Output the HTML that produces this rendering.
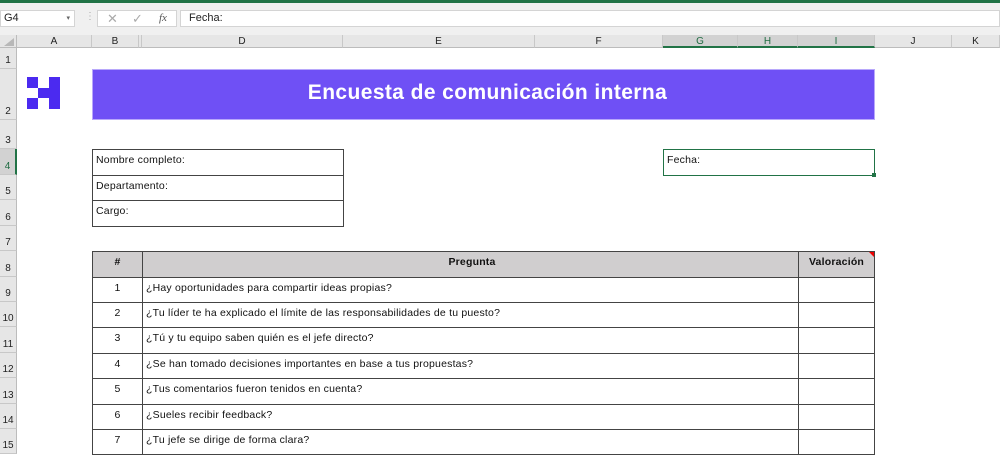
<!DOCTYPE html>
<html><head><meta charset="utf-8"><style>
*{margin:0;padding:0;box-sizing:border-box}
body{width:1000px;height:441px;overflow:hidden;background:#fff;font-family:"Liberation Sans",sans-serif;position:relative;font-size:11px;color:#222}
.a{position:absolute}
.ch{position:absolute;top:35px;height:13px;border-right:1px solid #c8c8c8;text-align:center;font-size:10px;line-height:13px;color:#222;background:#e6e6e6;border-bottom:1px solid #bcbcbc}
.rh{position:absolute;left:0;width:17px;border-bottom:1px solid #c8c8c8;font-size:10px;text-align:center;background:#e6e6e6;border-right:1px solid #bcbcbc;display:flex;align-items:flex-end;justify-content:center;padding-bottom:2px;color:#222}
.cell{position:absolute;border:1px solid #444;font-size:10.5px;padding-left:3px;line-height:21px;color:#111;letter-spacing:0.2px}
</style></head><body>
<div class="a" style="left:0;top:0;width:1000px;height:3px;background:#217346"></div>
<div class="a" style="left:0;top:3px;width:1000px;height:32px;background:#f0f0f0"></div>
<div class="a" style="left:0;top:10px;width:75px;height:17px;background:#fff;border:1px solid #d4d4d4;font-size:11px;line-height:15px;padding-left:3px">G4<span style="position:absolute;right:4px;font-size:7px;color:#666">▾</span></div>
<div class="a" style="left:85px;top:11px;color:#aaa;font-size:10px">⋮</div>
<div class="a" style="left:97px;top:10px;width:80px;height:17px;background:#fff;border:1px solid #d4d4d4;color:#aaa;font-size:13px;line-height:15px"><span style="position:absolute;left:9px">✕</span><span style="position:absolute;left:34px">✓</span><span style="position:absolute;left:61px;font-family:'Liberation Serif';font-style:italic;font-size:11px;color:#555">fx</span></div>
<div class="a" style="left:180px;top:10px;width:820px;height:17px;background:#fff;border:1px solid #d4d4d4;font-size:11px;line-height:15px;padding-left:8px">Fecha:</div>
<div class="a" style="left:0;top:35px;width:17px;height:13px;background:#e6e6e6;border-right:1px solid #bcbcbc;border-bottom:1px solid #bcbcbc"></div>
<div class="a" style="left:4px;top:38px;width:0;height:0;border-left:10px solid transparent;border-bottom:8px solid #b8b8b8"></div>
<div class="ch" style="left:17px;width:75px">A</div>
<div class="ch" style="left:92px;width:47px">B</div>
<div class="ch" style="left:139px;width:3px"></div>
<div class="ch" style="left:142px;width:201px">D</div>
<div class="ch" style="left:343px;width:192px">E</div>
<div class="ch" style="left:535px;width:128px">F</div>
<div class="ch" style="left:663px;width:75px;background:#d2d2d2;border-bottom:2px solid #217346;color:#1e6b41">G</div>
<div class="ch" style="left:738px;width:60px;background:#d2d2d2;border-bottom:2px solid #217346;color:#1e6b41">H</div>
<div class="ch" style="left:798px;width:77px;background:#d2d2d2;border-bottom:2px solid #217346;color:#1e6b41">I</div>
<div class="ch" style="left:875px;width:77px">J</div>
<div class="ch" style="left:952px;width:48px">K</div>
<div class="rh" style="top:48px;height:21px">1</div>
<div class="rh" style="top:69px;height:51px">2</div>
<div class="rh" style="top:120px;height:29px">3</div>
<div class="rh" style="top:149px;height:26px;background:#d2d2d2;border-right:2px solid #217346;color:#1e6b41">4</div>
<div class="rh" style="top:175px;height:25px">5</div>
<div class="rh" style="top:200px;height:26px">6</div>
<div class="rh" style="top:226px;height:25px">7</div>
<div class="rh" style="top:251px;height:26px">8</div>
<div class="rh" style="top:277px;height:25px">9</div>
<div class="rh" style="top:302px;height:25px">10</div>
<div class="rh" style="top:327px;height:26px">11</div>
<div class="rh" style="top:353px;height:25px">12</div>
<div class="rh" style="top:378px;height:26px">13</div>
<div class="rh" style="top:404px;height:25px">14</div>
<div class="rh" style="top:429px;height:25px">15</div>
<div class="a" style="left:27px;top:77px;width:11px;height:11px;background:#4b2af0"></div>
<div class="a" style="left:38px;top:88px;width:22px;height:10px;background:#4b2af0"></div>
<div class="a" style="left:27px;top:98px;width:11px;height:11px;background:#4b2af0"></div>
<div class="a" style="left:49px;top:77px;width:11px;height:32px;background:#4b2af0"></div>
<div class="a" style="left:92px;top:69px;width:783px;height:51px;background:#6f50f5;border:1px solid #b8a8fb;color:#fff;font-weight:bold;font-size:21px;letter-spacing:0.4px;text-align:center;line-height:45px;padding-left:8px">Encuesta de comunicación interna</div>
<div class="cell" style="left:92px;top:149px;width:252px;height:27px">Nombre completo:</div>
<div class="cell" style="left:92px;top:175px;width:252px;height:26px">Departamento:</div>
<div class="cell" style="left:92px;top:200px;width:252px;height:27px">Cargo:</div>
<div class="cell" style="left:663px;top:149px;width:212px;height:27px;border-color:#217346">Fecha:</div>
<div class="a" style="left:872px;top:173px;width:4px;height:4px;background:#217346"></div>
<div class="cell" style="left:92px;top:251px;width:51px;height:27px;background:#d0cecf;text-align:center;font-weight:bold;padding:0">#</div>
<div class="cell" style="left:142px;top:251px;width:657px;height:27px;background:#d0cecf;text-align:center;font-weight:bold">Pregunta</div>
<div class="cell" style="left:798px;top:251px;width:77px;height:27px;background:#d0cecf;text-align:center;font-weight:bold;padding:0">Valoración</div>
<div class="a" style="left:869px;top:252px;width:0;height:0;border-left:5px solid transparent;border-top:5px solid #e00"></div>
<div class="cell" style="left:92px;top:277px;width:51px;height:26px;text-align:center;padding:0">1</div><div class="cell" style="left:142px;top:277px;width:657px;height:26px">¿Hay oportunidades para compartir ideas propias?</div><div class="cell" style="left:798px;top:277px;width:77px;height:26px"></div>
<div class="cell" style="left:92px;top:302px;width:51px;height:26px;text-align:center;padding:0">2</div><div class="cell" style="left:142px;top:302px;width:657px;height:26px">¿Tu líder te ha explicado el límite de las responsabilidades de tu puesto?</div><div class="cell" style="left:798px;top:302px;width:77px;height:26px"></div>
<div class="cell" style="left:92px;top:327px;width:51px;height:27px;text-align:center;padding:0">3</div><div class="cell" style="left:142px;top:327px;width:657px;height:27px">¿Tú y tu equipo saben quién es el jefe directo?</div><div class="cell" style="left:798px;top:327px;width:77px;height:27px"></div>
<div class="cell" style="left:92px;top:353px;width:51px;height:26px;text-align:center;padding:0">4</div><div class="cell" style="left:142px;top:353px;width:657px;height:26px">¿Se han tomado decisiones importantes en base a tus propuestas?</div><div class="cell" style="left:798px;top:353px;width:77px;height:26px"></div>
<div class="cell" style="left:92px;top:378px;width:51px;height:27px;text-align:center;padding:0">5</div><div class="cell" style="left:142px;top:378px;width:657px;height:27px">¿Tus comentarios fueron tenidos en cuenta?</div><div class="cell" style="left:798px;top:378px;width:77px;height:27px"></div>
<div class="cell" style="left:92px;top:404px;width:51px;height:26px;text-align:center;padding:0">6</div><div class="cell" style="left:142px;top:404px;width:657px;height:26px">¿Sueles recibir feedback?</div><div class="cell" style="left:798px;top:404px;width:77px;height:26px"></div>
<div class="cell" style="left:92px;top:429px;width:51px;height:26px;text-align:center;padding:0">7</div><div class="cell" style="left:142px;top:429px;width:657px;height:26px">¿Tu jefe se dirige de forma clara?</div><div class="cell" style="left:798px;top:429px;width:77px;height:26px"></div>
</body></html>
